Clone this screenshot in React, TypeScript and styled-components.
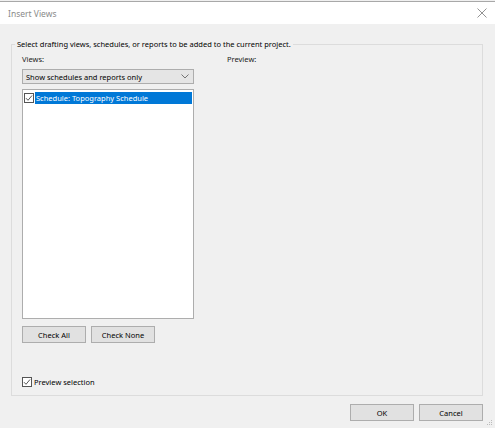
import React from "react";
import styled, { createGlobalStyle } from "styled-components";

const GlobalStyle = createGlobalStyle`
  *, *::before, *::after {
    box-sizing: border-box;
  }
  html, body {
    margin: 0;
    padding: 0;
    background: #ffffff;
  }
  body {
    font-family: "Noto Sans", "Open Sans", sans-serif;
    font-size: 7.5px;
    color: #000;
  }
`;

function CheckMark() {
  return (
    <svg width="8" height="8" viewBox="0 0 8 8">
      <path d="M1 4.2 L3 6.3 L7 1.5" fill="none" stroke="#444" strokeWidth="0.9" />
    </svg>
  );
}

function CheckBox({ checked }: { checked?: boolean }) {
  return <Box>{checked && <CheckMark />}</Box>;
}

export default function App() {
  return (
    <>
      <GlobalStyle />
      <Window>
        <TitleBar>
          <Title>Insert Views</Title>
          <svg width="10" height="10" viewBox="0 0 10 10">
            <path d="M0.5 0.5 L9.5 9.5 M9.5 0.5 L0.5 9.5" stroke="#777" strokeWidth="0.8" />
          </svg>
        </TitleBar>
        <Body>
          <GroupBox>
            <GroupTitle>
              Select drafting views, schedules, or reports to be added to the current project.
            </GroupTitle>
            <LeftColumn>
              <FieldLabel>Views:</FieldLabel>
              <Dropdown>
                <span>Show schedules and reports only</span>
                <svg width="8" height="5" viewBox="0 0 8 5">
                  <path d="M0.5 0.5 L4 4 L7.5 0.5" fill="none" stroke="#555" strokeWidth="0.8" />
                </svg>
              </Dropdown>
              <ListBox>
                <ListRow>
                  <CheckBox checked />
                  <RowText $selected>Schedule: Topography Schedule</RowText>
                </ListRow>
              </ListBox>
              <ButtonRow>
                <Button>Check All</Button>
                <Button>Check None</Button>
              </ButtonRow>
              <CheckRow>
                <CheckBox checked />
                <span>Preview selection</span>
              </CheckRow>
            </LeftColumn>
            <RightColumn>
              <FieldLabel>Preview:</FieldLabel>
            </RightColumn>
          </GroupBox>
          <Footer>
            <Button>OK</Button>
            <Button>Cancel</Button>
          </Footer>
        </Body>
        <Grip width="6" height="6" viewBox="0 0 6 6">
          <rect x="4" y="0" width="1" height="1" fill="#bbb" />
          <rect x="2" y="2" width="1" height="1" fill="#bbb" />
          <rect x="4" y="2" width="1" height="1" fill="#bbb" />
          <rect x="0" y="4" width="1" height="1" fill="#bbb" />
          <rect x="2" y="4" width="1" height="1" fill="#bbb" />
          <rect x="4" y="4" width="1" height="1" fill="#bbb" />
        </Grip>
      </Window>
    </>
  );
}

const Window = styled.div`
  position: relative;
  width: 495px;
  height: 428px;
  background: #f0f0f0;
  display: flex;
  flex-direction: column;
  overflow: hidden;
`;

const TitleBar = styled.div`
  height: 23px;
  background: #fff;
  border-top: 1px solid #a8a8a8;
  margin-top: 1px;
  display: flex;
  align-items: center;
  justify-content: space-between;
  padding: 0 8px 0 8px;
`;

const Title = styled.span`
  font-size: 8.5px;
  color: #8a8a8a;
`;

const Body = styled.div`
  flex: 1;
  padding: 20px 12px 0 11px;
  display: flex;
  flex-direction: column;
`;

const GroupBox = styled.div`
  position: relative;
  height: 352px;
  border: 1px solid #dcdcdc;
  display: grid;
  grid-template-columns: 172px 1fr;
  column-gap: 33px;
  padding: 9px 10px 0 10px;
`;

const GroupTitle = styled.span`
  position: absolute;
  top: -7px;
  left: 3px;
  padding: 0 2px;
  background: #f0f0f0;
  line-height: 12px;
`;

const LeftColumn = styled.div`
  display: flex;
  flex-direction: column;
`;

const RightColumn = styled.div`
  display: flex;
  flex-direction: column;
`;

const FieldLabel = styled.span`
  line-height: 11px;
  height: 11px;
  color: #222;
`;

const Dropdown = styled.div`
  margin-top: 4px;
  height: 15px;
  border: 1px solid #adadad;
  background: #e5e5e5;
  display: flex;
  align-items: center;
  justify-content: space-between;
  padding: 0 4px 0 3px;
`;

const ListBox = styled.div`
  margin-top: 5px;
  height: 230px;
  border: 1px solid #adadad;
  background: #fff;
  padding: 2px 1px;
`;

const ListRow = styled.div`
  display: flex;
  align-items: center;
  height: 12px;
`;

const RowText = styled.span<{ $selected?: boolean }>`
  flex: 1;
  height: 12px;
  line-height: 12px;
  padding-left: 1px;
  background: ${(p) => (p.$selected ? "#0078d7" : "transparent")};
  color: ${(p) => (p.$selected ? "#fff" : "#000")};
`;

const Box = styled.span`
  width: 10px;
  height: 10px;
  border: 1px solid #555;
  background: #fff;
  display: inline-flex;
  align-items: center;
  justify-content: center;
  margin-right: 1px;
  flex: none;
`;

const ButtonRow = styled.div`
  margin-top: 7px;
  display: flex;
  gap: 5px;
`;

const Button = styled.button`
  width: 64px;
  height: 17px;
  padding: 0;
  border: 1px solid #adadad;
  background: #e1e1e1;
  font-family: inherit;
  font-size: 7.5px;
  color: #000;
`;

const CheckRow = styled.div`
  margin-top: 34px;
  display: flex;
  align-items: center;
  gap: 1px;
`;

const Footer = styled.div`
  margin-top: 8px;
  display: flex;
  justify-content: flex-end;
  gap: 5px;
`;

const Grip = styled.svg`
  position: absolute;
  right: 2px;
  bottom: 2px;
`;
